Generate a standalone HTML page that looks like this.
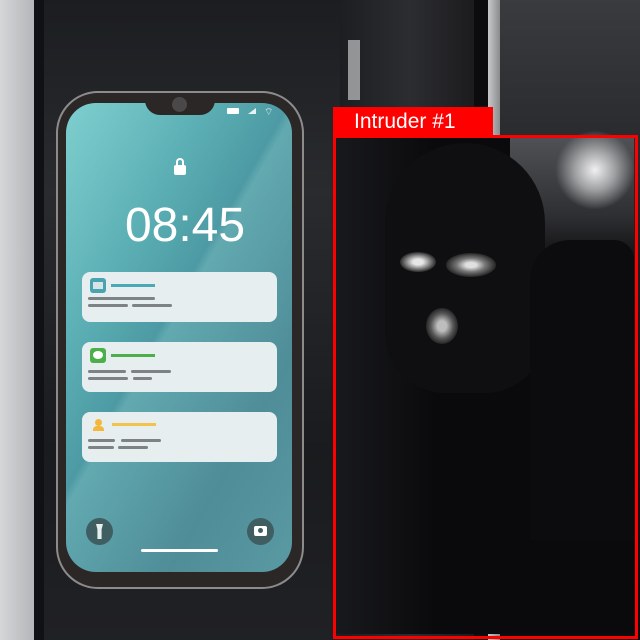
<!DOCTYPE html>
<html><head><style>
*{margin:0;padding:0;box-sizing:border-box}
body{width:640px;height:640px;overflow:hidden;position:relative;background:#1c1d20;font-family:"Liberation Sans",sans-serif}
.a{position:absolute}
.card{position:absolute;left:82px;width:195px;height:50px;background:#e6eeef;border-radius:8px}
.ln{position:absolute;height:3px;background:#7d8284;border-radius:2px}
</style></head><body>
<div class="a" style="left:0;top:0;width:34px;height:640px;background:linear-gradient(90deg,#d4d6d8,#b4b6b9)"></div>
<div class="a" style="left:34px;top:0;width:10px;height:640px;background:#101114"></div>
<div class="a" style="left:44px;top:0;width:300px;height:640px;background:linear-gradient(180deg,#1c1d20,#2a2b2e 30%,#1a1b1e 70%,#202125)"></div>
<div class="a" style="left:340px;top:0;width:140px;height:640px;background:linear-gradient(90deg,#1d1e21,#2c2d31 50%,#1a1a1c)"></div>
<div class="a" style="left:348px;top:40px;width:12px;height:60px;background:#c5c6c8;opacity:.7"></div>
<div class="a" style="left:474px;top:0;width:14px;height:640px;background:#0c0c0e"></div>
<div class="a" style="left:488px;top:0;width:12px;height:640px;background:linear-gradient(90deg,#c8c9cb,#8a8b8d)"></div>
<div class="a" style="left:500px;top:0;width:140px;height:640px;background:linear-gradient(180deg,#3a3b3e,#1c1d20 40%,#0c0c0e)"></div>
<!-- intruder -->
<div class="a" style="left:336px;top:138px;width:298px;height:496px;background:#0a0a0c"></div>
<div class="a" style="left:336px;top:138px;width:100px;height:496px;background:linear-gradient(90deg,#18191c,#0a0a0c)"></div>
<div class="a" style="left:510px;top:138px;width:124px;height:130px;background:linear-gradient(180deg,#505154,#2e2f32 60%,#0a0a0c)"></div>
<div class="a" style="left:555px;top:130px;width:80px;height:80px;border-radius:50%;background:radial-gradient(#f0f0f2,#a0a1a3 35%,transparent 70%)"></div>
<div class="a" style="left:385px;top:143px;width:160px;height:250px;border-radius:80px 80px 60px 60px;background:#0f0f11"></div>
<div class="a" style="left:530px;top:240px;width:104px;height:300px;border-radius:40px 20px 0 0;background:#0c0c0e"></div>
<div class="a" style="left:400px;top:252px;width:36px;height:20px;border-radius:50%;background:radial-gradient(#e6e6e6 20%,#8a8a8a 45%,#1a1a1a 75%)"></div>
<div class="a" style="left:446px;top:253px;width:50px;height:24px;border-radius:50%;background:radial-gradient(#e0e0e0 15%,#777 40%,#1a1a1a 75%)"></div>
<div class="a" style="left:426px;top:308px;width:32px;height:36px;border-radius:50%;background:radial-gradient(#bdbdbd 20%,#555 50%,#111 80%)"></div>
<div class="a" style="left:333px;top:135px;width:305px;height:504px;border:3px solid #ff0000"></div>
<div class="a" style="left:333px;top:107px;width:160px;height:30px;background:#ff0000;color:#fff;font-size:21px;line-height:30px;padding-left:21px">Intruder #1</div>
<!-- phone -->
<div class="a" style="left:56px;top:91px;width:248px;height:498px;border-radius:42px;background:#2b2727;border:2px solid #8c8c8c"></div>
<div class="a" style="left:66px;top:103px;width:226px;height:469px;border-radius:30px;overflow:hidden;background:linear-gradient(120deg,#7fcfcf 0%,#5aaeb3 30%,#4d9aa4 45%,#62a9b0 47%,#4f8d98 75%,#5a9aa3 100%)"></div>
<div class="a" style="left:145px;top:100px;width:70px;height:15px;border-radius:0 0 16px 16px;background:#2b2727"></div>
<div class="a" style="left:172px;top:97px;width:15px;height:15px;border-radius:50%;background:#4a4848"></div>
<div class="a" style="left:227px;top:108px;width:12px;height:6px;background:#fff;border-radius:1px"></div>
<div class="a" style="left:248px;top:108px;width:8px;height:6px;background:#e8f2f2;clip-path:polygon(100% 0,100% 100%,0 100%)"></div>
<div class="a" style="left:264px;top:106px;font-size:10px;color:#fff">⌔</div>
<div class="a" style="left:174px;top:158px;width:12px;height:17px;">
  <div class="a" style="left:2px;top:0;width:8px;height:9px;border:2px solid #fff;border-bottom:none;border-radius:4px 4px 0 0"></div>
  <div class="a" style="left:0;top:7px;width:12px;height:10px;background:#fff;border-radius:2px"></div>
</div>
<div class="a" style="left:66px;top:198px;width:238px;text-align:center;color:#fff;font-size:48px;font-family:'Liberation Sans',sans-serif;letter-spacing:0px">08:45</div>
<div class="card" style="top:272px"></div>
<div class="a" style="left:90px;top:278px;width:16px;height:15px;background:#4aa3b0;border-radius:3px"><div class="a" style="left:3px;top:4px;width:10px;height:7px;background:#d8e4e6"></div></div>
<div class="a" style="left:111px;top:284px;width:44px;height:3px;background:#4aa9b5"></div>
<div class="ln" style="left:88px;top:297px;width:67px"></div>
<div class="ln" style="left:88px;top:304px;width:40px"></div><div class="ln" style="left:132px;top:304px;width:40px"></div>
<div class="card" style="top:342px"></div>
<div class="a" style="left:90px;top:348px;width:16px;height:15px;background:#4bb04a;border-radius:3px"><div class="a" style="left:3px;top:3px;width:10px;height:8px;background:#fff;border-radius:50%"></div></div>
<div class="a" style="left:111px;top:354px;width:44px;height:3px;background:#4bb04a"></div>
<div class="ln" style="left:88px;top:370px;width:38px"></div><div class="ln" style="left:131px;top:370px;width:40px"></div>
<div class="ln" style="left:88px;top:377px;width:40px"></div><div class="ln" style="left:133px;top:377px;width:19px"></div>
<div class="card" style="top:412px"></div>
<div class="a" style="left:95px;top:419px;width:7px;height:7px;border-radius:50%;background:#f3b73a"></div>
<div class="a" style="left:93px;top:426px;width:11px;height:5px;border-radius:4px 4px 0 0;background:#f3b73a"></div>
<div class="a" style="left:112px;top:423px;width:44px;height:3px;background:#f3c24a"></div>
<div class="ln" style="left:88px;top:439px;width:27px"></div><div class="ln" style="left:121px;top:439px;width:40px"></div>
<div class="ln" style="left:88px;top:446px;width:26px"></div><div class="ln" style="left:118px;top:446px;width:30px"></div>
<div class="a" style="left:86px;top:518px;width:27px;height:27px;border-radius:50%;background:#3f5e62"></div>
<div class="a" style="left:96px;top:524px;width:7px;height:15px;background:#e6eeee;clip-path:polygon(0 0,100% 0,80% 35%,80% 100%,20% 100%,20% 35%)"></div>
<div class="a" style="left:247px;top:518px;width:27px;height:27px;border-radius:50%;background:#3f5e62"></div>
<div class="a" style="left:254px;top:526px;width:13px;height:10px;background:#fff;border-radius:2px"><div class="a" style="left:4px;top:2px;width:5px;height:5px;border-radius:50%;background:#3f5e62"></div></div>
<div class="a" style="left:141px;top:549px;width:77px;height:3px;background:#fff;border-radius:2px"></div>
</body></html>
